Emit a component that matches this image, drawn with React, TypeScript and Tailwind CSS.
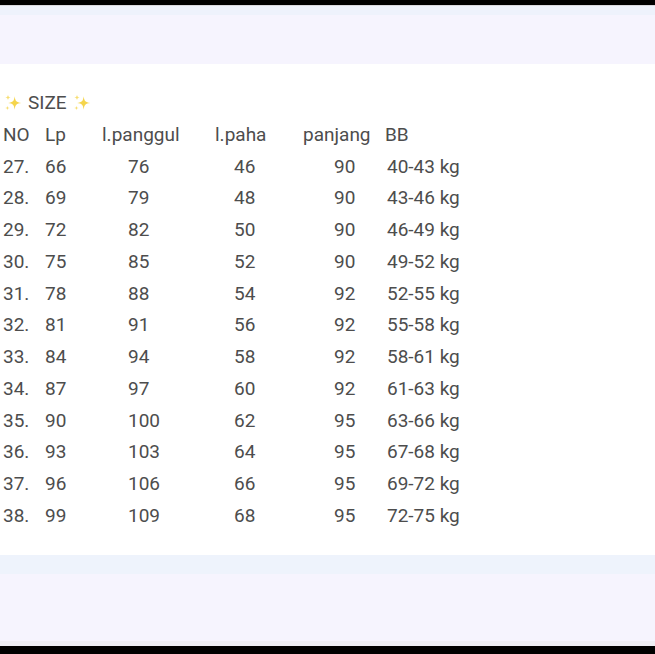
import React from "react";

const rows: [string, string, string, string, string, string][] = [
  ["27.", "66", "76", "46", "90", "40-43 kg"],
  ["28.", "69", "79", "48", "90", "43-46 kg"],
  ["29.", "72", "82", "50", "90", "46-49 kg"],
  ["30.", "75", "85", "52", "90", "49-52 kg"],
  ["31.", "78", "88", "54", "92", "52-55 kg"],
  ["32.", "81", "91", "56", "92", "55-58 kg"],
  ["33.", "84", "94", "58", "92", "58-61 kg"],
  ["34.", "87", "97", "60", "92", "61-63 kg"],
  ["35.", "90", "100", "62", "95", "63-66 kg"],
  ["36.", "93", "103", "64", "95", "67-68 kg"],
  ["37.", "96", "106", "66", "95", "69-72 kg"],
  ["38.", "99", "109", "68", "95", "72-75 kg"],
];

function Sparkles() {
  return (
    <svg width="20" height="20" viewBox="0 0 18 18" className="inline-block">
      <path d="M10.5 3 C11.1 7.5 12 8.4 16.5 9 C12 9.6 11.1 10.5 10.5 15 C9.9 10.5 9 9.6 4.5 9 C9 8.4 9.9 7.5 10.5 3 Z" fill="#f5d54c" />
      <path d="M4.5 1.5 C4.8 3.3 5.2 3.7 7 4 C5.2 4.3 4.8 4.7 4.5 6.5 C4.2 4.7 3.8 4.3 2 4 C3.8 3.7 4.2 3.3 4.5 1.5 Z" fill="#f7de72" />
      <path d="M4 11.5 C4.25 13 4.5 13.3 6 13.5 C4.5 13.7 4.25 14 4 15.5 C3.75 14 3.5 13.7 2 13.5 C3.5 13.3 3.75 13 4 11.5 Z" fill="#f7de72" />
    </svg>
  );
}

export default function App() {
  return (
    <div className="w-[655px] h-[654px] bg-black flex flex-col overflow-hidden" style={{ fontFamily: "Roboto, 'Liberation Sans', sans-serif" }}>
      <div className="h-[5px] shrink-0 bg-black" />
      <div className="h-[1px] shrink-0 bg-[#d9d9de]" />
      <div className="h-[9px] shrink-0 bg-[#eef2fc]" />
      <div className="h-[49px] shrink-0 bg-[#f6f4fe]" />
      <div className="h-[491px] shrink-0 bg-white pt-[23px] pl-[3px] text-[19px] leading-[31.75px] text-[#4d4d4d]">
        <div className="flex items-center h-[31.75px]">
          <Sparkles />
          <span className="ml-[5px] mr-[5px]">SIZE</span>
          <Sparkles />
        </div>
        <div className="flex">
          <div className="w-[42px]">NO</div>
          <div className="w-[57px]">Lp</div>
          <div className="w-[113px]">l.panggul</div>
          <div className="w-[88px]">l.paha</div>
          <div className="w-[82px]">panjang</div>
          <div>BB</div>
        </div>
        {rows.map((r) => (
          <div className="flex" key={r[0]}>
            <div className="w-[42px]">{r[0]}</div>
            <div className="w-[57px]">{r[1]}</div>
            <div className="w-[113px] pl-[26px]">{r[2]}</div>
            <div className="w-[88px] pl-[19px]">{r[3]}</div>
            <div className="w-[84px] pl-[31px]">{r[4]}</div>
            <div>{r[5]}</div>
          </div>
        ))}
      </div>
      <div className="h-[19px] shrink-0 bg-[#eef3fc]" />
      <div className="h-[67px] shrink-0 bg-[#f6f4fe]" />
      <div className="h-[5px] shrink-0 bg-[#efeef4]" />
      <div className="flex-1 bg-black" />
    </div>
  );
}
